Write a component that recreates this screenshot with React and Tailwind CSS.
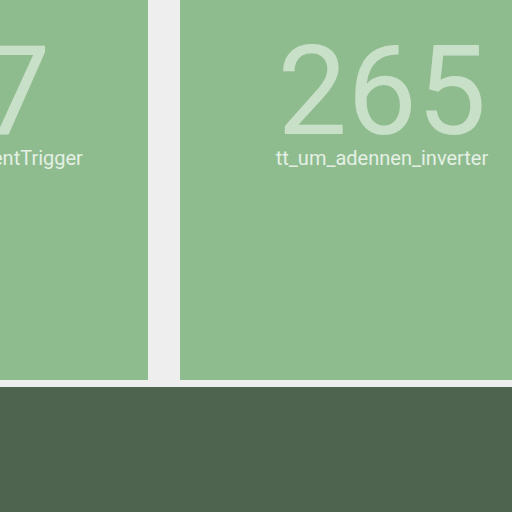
export default function App() {
  const tiles = [
    { count: 217, name: "tt_um_toivoh_rtl2_EventTrigger" },
    { count: 265, name: "tt_um_adennen_inverter" },
  ];

  return (
    <div className="h-[512px] w-[512px] overflow-hidden bg-[#eeeeee] font-['Roboto',sans-serif]">
      <div className="ml-[-256px] flex h-[380px] gap-[32px]">
        {tiles.map((t) => (
          <div key={t.name} className="flex w-[404px] shrink-0 flex-col items-center bg-[#8fbc8f] pt-[37px]">
            <div className="text-[124px] leading-[110px] text-[#c8e0c8]">{t.count}</div>
            <div className="mt-[1px] whitespace-nowrap text-[20px] leading-5 text-[#e4f0e4]">{t.name}</div>
          </div>
        ))}
      </div>
      <div className="mt-[7px] h-[125px] bg-[#4e644e]" />
    </div>
  );
}
